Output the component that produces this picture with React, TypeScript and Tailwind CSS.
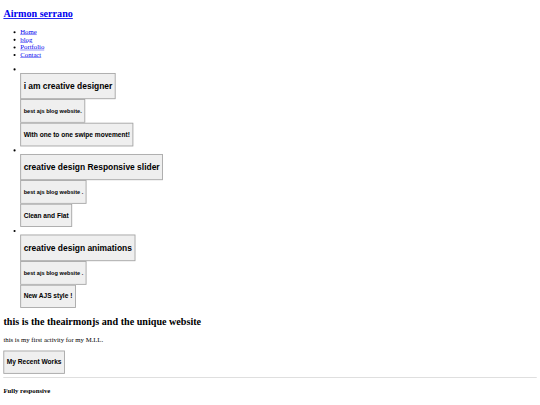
import React from "react";

const btn =
  "block w-fit bg-[#efefef] border-2 border-[#a3a3a3] px-[6px] py-px font-['Liberation_Sans',Arial,sans-serif] text-[13.333px] leading-[normal] text-black text-center cursor-default";

function Slide({ title, sub, tag }: { title: string; sub: string; tag: string }) {
  return (
    <li>
      <div>&nbsp;</div>
      <button className={btn}>
        <span className="block text-[20px] font-bold my-[16.6px]">{title}</span>
      </button>
      <button className={btn}>
        <span className="block text-[13.333px] font-bold my-[17.7px]">{sub}</span>
      </button>
      <button className={btn}>
        <span className="block text-[15.6px] font-bold my-[15.6px]">{tag}</span>
      </button>
    </li>
  );
}

export default function App() {
  return (
    <div className="w-[540px] h-[405px] overflow-hidden bg-white">
      <div className="flow-root w-[1280px] origin-top-left scale-[0.421875] px-[8px] font-['Liberation_Serif','Times_New_Roman',serif] text-[16px] leading-[normal] text-black">
        <h2 className="text-[24px] font-bold my-[19.92px]">
          <a href="#" className="text-[#0000ee] underline">
            Airmon serrano
          </a>
        </h2>
        <ul className="list-disc pl-[40px] my-[16px]">
          {["Home", "blog", "Portfolio", "Contact"].map((t) => (
            <li key={t}>
              <a href="#" className="text-[#0000ee] underline">
                {t}
              </a>
            </li>
          ))}
        </ul>
        <ul className="list-disc pl-[40px] my-[16px]">
          <Slide title="i am creative designer" sub="best ajs blog website." tag="With one to one swipe movement!" />
          <Slide title="creative design Responsive slider" sub="best ajs blog website ." tag="Clean and Flat" />
          <Slide title="creative design animations" sub="best ajs blog website ." tag="New AJS style !" />
        </ul>
        <h2 className="text-[24px] font-bold my-[19.92px]">this is the theairmonjs and the unique website</h2>
        <p className="my-[16px]">this is my first activity for my M.I.L.</p>
        <button className={btn}>
          <span className="block text-[15.6px] font-bold my-[15.6px]">My Recent Works</span>
        </button>
        <hr className="my-[8px] h-0 border-t border-b border-t-[#9a9a9a] border-b-[#eeeeee]" />
        <h4 className="text-[16px] font-bold my-[21.28px]">Fully responsive</h4>
        <p className="my-[16px]">it will fit all devices</p>
      </div>
    </div>
  );
}
